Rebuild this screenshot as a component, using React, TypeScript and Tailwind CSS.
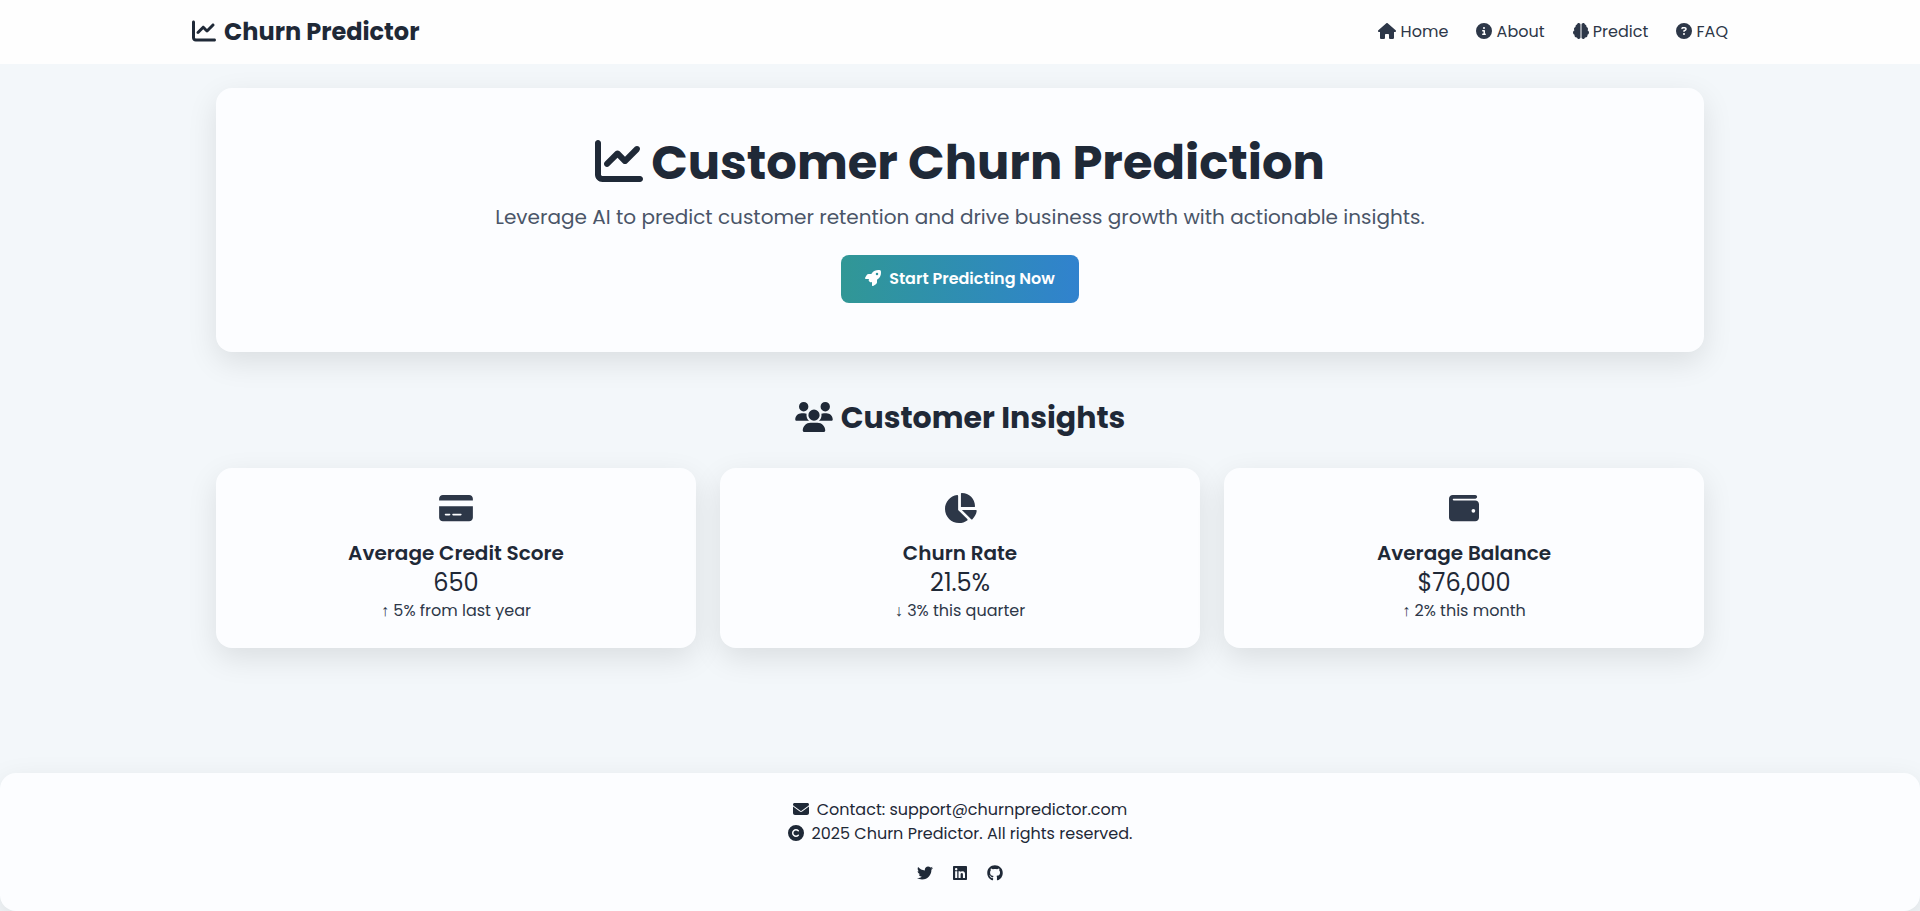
import React from "react";
import {
  FaBrain,
  FaChartLine,
  FaChartPie,
  FaCircleInfo,
  FaCircleQuestion,
  FaCopyright,
  FaCreditCard,
  FaEnvelope,
  FaGithub,
  FaHouse,
  FaLinkedin,
  FaRocket,
  FaTwitter,
  FaUsers,
  FaWallet,
} from "react-icons/fa6";

const navLinks = [
  { label: "Home", Icon: FaHouse, iconWidth: "w-[18px]" },
  { label: "About", Icon: FaCircleInfo, iconWidth: "w-4" },
  { label: "Predict", Icon: FaBrain, iconWidth: "w-4" },
  { label: "FAQ", Icon: FaCircleQuestion, iconWidth: "w-4" },
];

const insights = [
  { title: "Average Credit Score", value: "650", arrow: "↑", trend: "5% from last year", Icon: FaCreditCard, iconWidth: "w-[34px]" },
  { title: "Churn Rate", value: "21.5%", arrow: "↓", trend: "3% this quarter", Icon: FaChartPie, iconWidth: "w-[34px]" },
  { title: "Average Balance", value: "$76,000", arrow: "↑", trend: "2% this month", Icon: FaWallet, iconWidth: "w-[30px]" },
];

const socials = [
  { label: "Twitter", Icon: FaTwitter, iconWidth: "w-4" },
  { label: "LinkedIn", Icon: FaLinkedin, iconWidth: "w-3.5" },
  { label: "GitHub", Icon: FaGithub, iconWidth: "w-4" },
];

export default function App() {
  return (
    <div className="flex min-h-screen flex-col bg-[#f3f7fa] font-['Poppins','Inter',sans-serif] text-[#1f2937]">
      <header className="z-10 bg-[#fefefe]">
        <div className="mx-auto flex h-16 max-w-[1536px] items-center justify-between">
          <a href="#home" className="text-2xl font-bold">
            <FaChartLine className="mr-2 inline align-[-0.125em]" />
            Churn Predictor
          </a>
          <nav className="flex gap-7">
            {navLinks.map(({ label, Icon, iconWidth }) => (
              <a key={label} href={`#${label.toLowerCase()}`} className="text-base text-[#2d3748]">
                <Icon className={`inline h-4 align-[-0.125em] ${iconWidth}`} /> {label}
              </a>
            ))}
          </nav>
        </div>
      </header>

      <main className="mx-auto w-full max-w-[1536px] flex-1 p-6">
        <section className="flex flex-col items-center rounded-2xl bg-[#fcfdff] px-12 pt-[45px] pb-[49px] text-center shadow-[0_10px_30px_rgba(0,0,0,0.1)]">
          <h1 className="text-5xl leading-[60px] font-bold">
            <FaChartLine className="mr-2 inline align-[-0.125em]" />
            Customer Churn Prediction
          </h1>
          <p className="mt-2.5 text-xl text-[#4a5568]">
            Leverage AI to predict customer retention and drive business growth with actionable insights.
          </p>
          <button
            type="button"
            className="mt-6 h-12 rounded-lg bg-linear-to-r from-[#319795] to-[#3182ce] px-6 text-base font-semibold text-white"
          >
            <FaRocket className="mr-2 inline align-[-0.125em]" />
            Start Predicting Now
          </button>
        </section>

        <section className="mt-12">
          <h2 className="text-center text-3xl font-bold">
            <FaUsers className="mr-2 inline h-[30px] w-[38px] align-[-0.125em]" />
            Customer Insights
          </h2>
          <div className="mt-8 grid grid-cols-1 gap-6 md:grid-cols-3">
            {insights.map(({ title, value, arrow, trend, Icon, iconWidth }) => (
              <article
                key={title}
                className="flex flex-col items-center rounded-2xl bg-[#fcfdff] px-6 py-[25px] text-center shadow-[0_10px_30px_rgba(0,0,0,0.1)]"
              >
                <Icon className={`mb-4 h-[30px] text-[#2d3748] ${iconWidth}`} />
                <h3 className="text-xl font-semibold">{title}</h3>
                <p className="text-2xl">{value}</p>
                <p className="text-base text-[#2d3748]">
                  <span className="font-['Liberation_Serif',serif]">{arrow}</span> {trend}
                </p>
              </article>
            ))}
          </div>
        </section>
      </main>

      <footer className="rounded-2xl bg-[#fcfdff] px-6 pt-[25px] pb-[26px] text-center shadow-[0_10px_30px_rgba(0,0,0,0.1)]">
        <p className="text-base">
          <FaEnvelope className="mr-2 inline align-[-0.125em]" />
          Contact: support@churnpredictor.com
        </p>
        <p className="text-base">
          <FaCopyright className="mr-2 inline align-[-0.125em]" />
          2025 Churn Predictor. All rights reserved.
        </p>
        <div className="mt-[15px] flex h-6 items-center justify-center gap-5">
          {socials.map(({ label, Icon, iconWidth }) => (
            <a key={label} href={`#${label.toLowerCase()}`} aria-label={label}>
              <Icon className={`h-4 ${iconWidth}`} />
            </a>
          ))}
        </div>
      </footer>
    </div>
  );
}
